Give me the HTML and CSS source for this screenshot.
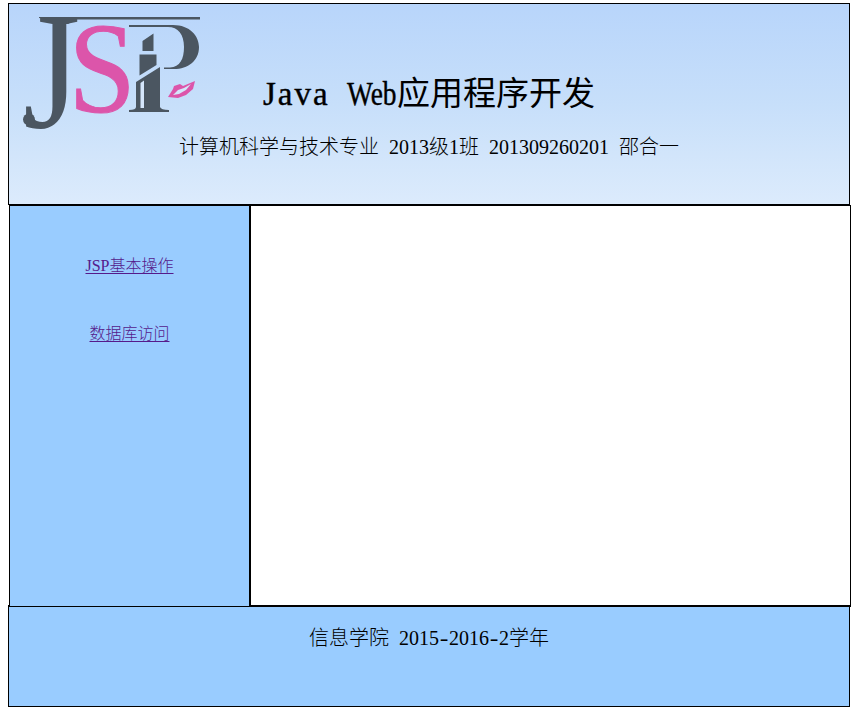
FILE: index.html
```html
<!DOCTYPE html>
<html lang="zh-CN">
<head>
<meta charset="utf-8">
<title>Java Web应用程序开发</title>
<link rel="stylesheet" href="styles.css">
</head>
<body>
<div class="page">
  <header class="header">
    <svg class="logo" width="200" height="135" viewBox="9 4 200 135">
      <g class="ink">
        <text class="glyph stem" transform="translate(23 127) scale(1.15 1.3)" font-size="128">J</text>
        <path d="M39 17H200V19.500H76L68 24H54Q50 19 39 18Z"/>
        <circle cx="29" cy="119.500" r="6"/>
        <path d="M129 25H173C190 25 199 36 199 47C199 61 188 69 174 69H164V67.500H170C180 67 184 59 184 47C184 34 178 27 168 27H129Z"/>
        <path d="M142.500 41L153.500 33.500V51H142.500ZM139.500 54.500H156.500V65L139.500 75.500ZM136 82L160 67V107Q161 110 169 110V112H129V110Q136 110 136 107Z"/>
      </g>
      <path class="shine" d="M140.500 83L144 80.500V108H140.500Z"/>
      <text class="glyph pink curve" transform="translate(68.500 112) scale(.96 1.02)" font-size="126">S</text>
      <path class="pink" d="M168 97L173 89L174 86L180 84L183 86L195 81L193 89L186 95L178 98Z"/>
      <path class="shine" d="M173 95L178 90L184 88L191 84L186 90L179 94Z"/>
    </svg>
    <h1 class="title"><span class="java">Java</span><span class="web">Web</span>应用程序开发</h1>
    <p class="subtitle">计算机科学与技术专业 2013级1班 201309260201 邵合一</p>
  </header>
  <div class="middle">
    <nav class="sidebar">
      <a href="#">JSP基本操作</a>
      <a href="#">数据库访问</a>
    </nav>
    <main class="content"></main>
  </div>
  <footer class="footer">信息学院 2015<span class="dash">-</span>2016<span class="dash">-</span>2学年</footer>
</div>
</body>
</html>
```
FILE: styles.css
```css
* { box-sizing: border-box; }
body {
  margin: 3px 0 0 8px;
  background: #fff;
  color: #000;
  font-family: "Liberation Serif", "Noto Sans CJK SC", serif;
  font-weight: 300;
}
.page { width: 843px; }
.header {
  position: relative;
  width: 842px;
  height: 202px;
  border: 1px solid #000;
  background: linear-gradient(#b8d5fb, #c7dffa 50%, #dcebfc);
  text-align: center;
}
.logo { position: absolute; left: 0; top: 0; overflow: visible; }
.glyph { font-family: "Liberation Serif", serif; font-weight: 400; }
.ink { fill: #4b5661; }
.pink { fill: #dc55aa; }
.curve { stroke: #dc55aa; stroke-width: 1; }
.shine { fill: #d5e6fb; }
.title {
  margin: 0;
  padding-top: 66px;
  font-size: 33px;
  line-height: 48px;
  font-weight: 400;
  white-space: nowrap;
}
.java, .web { display: inline-block; text-align: left; }
.java { width: 84px; letter-spacing: 2px; -webkit-text-stroke: .4px #000; }
.web { width: 50px; transform: scaleX(.83); transform-origin: left; -webkit-text-stroke: .4px #000; }
.subtitle {
  margin: 14px 0 0;
  font-size: 20px;
  line-height: 30px;
  word-spacing: 5px;
}
.middle { position: relative; z-index: 1; display: flex; height: 402px; padding-left: 1px; }
.sidebar {
  width: 241px;
  border: 1px solid #000;
  background: #9cf;
  padding-top: 48px;
  display: flex;
  flex-direction: column;
  align-items: center;
  gap: 44px;
  font-size: 16px;
  line-height: 24px;
}
.sidebar a { color: #551a8b; text-underline-offset: 2px; }
.content { width: 601px; border: 1px solid #000; }
.footer {
  width: 842px;
  height: 102px;
  margin-top: -2px;
  border: 1px solid #000;
  background: #9cf;
  padding-top: 17px;
  text-align: center;
  font-size: 20px;
  line-height: 30px;
  word-spacing: 5px;
}
.dash { display: inline-block; width: 10px; transform: scaleX(1.3); }
```
